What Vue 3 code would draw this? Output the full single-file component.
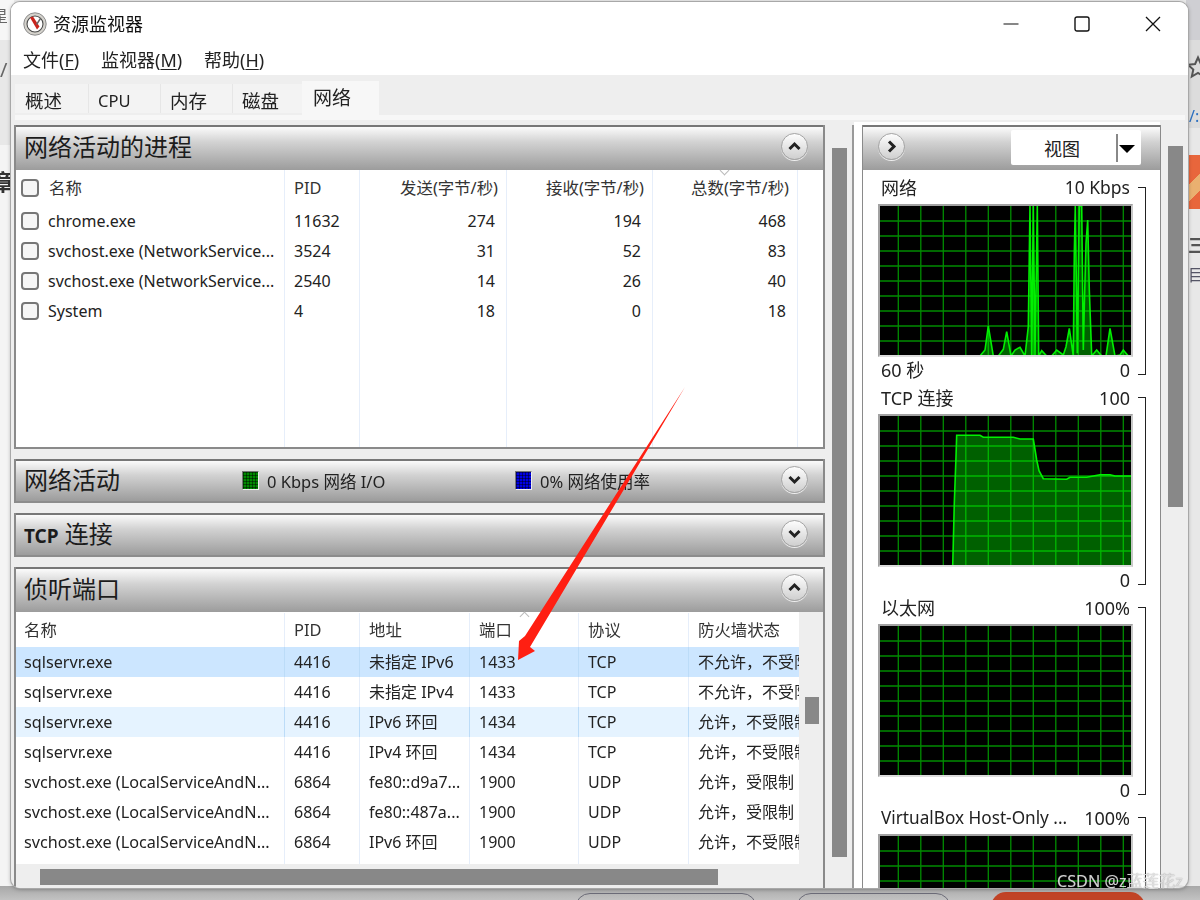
<script setup>
const tabs = [
  { label: '概述' },
  { label: 'CPU' },
  { label: '内存' },
  { label: '磁盘' },
  { label: '网络', active: true }
]

const processes = [
  ['chrome.exe', '11632', '274', '194', '468'],
  ['svchost.exe (NetworkService...', '3524', '31', '52', '83'],
  ['svchost.exe (NetworkService...', '2540', '14', '26', '40'],
  ['System', '4', '18', '0', '18']
]

const ports = [
  { c: ['sqlservr.exe', '4416', '未指定 IPv6', '1433', 'TCP', '不允许，不受限制'], tone: 'sel' },
  { c: ['sqlservr.exe', '4416', '未指定 IPv4', '1433', 'TCP', '不允许，不受限制'] },
  { c: ['sqlservr.exe', '4416', 'IPv6 环回', '1434', 'TCP', '允许，不受限制'], tone: 'hover' },
  { c: ['sqlservr.exe', '4416', 'IPv4 环回', '1434', 'TCP', '允许，不受限制'] },
  { c: ['svchost.exe (LocalServiceAndN...', '6864', 'fe80::d9a7...', '1900', 'UDP', '允许，受限制'] },
  { c: ['svchost.exe (LocalServiceAndN...', '6864', 'fe80::487a...', '1900', 'UDP', '允许，受限制'] },
  { c: ['svchost.exe (LocalServiceAndN...', '6864', 'IPv6 环回', '1900', 'UDP', '允许，不受限制'] }
]

const vLines = Array.from({ length: 11 }, (_, i) => 18.3 + 22.5 * i)
const hLines = Array.from({ length: 9 }, (_, i) => 15 + 15 * i)

const net = [[420,738],[435,720],[445,648],[460,738],[475,738],[490,718],[500,665],[513,738],[525,720],[540,712],[555,738],[565,650],[570,288],[575,738],[580,288],[585,738],[592,288],[596,738],[605,722],[620,738],[635,738],[650,720],[670,735],[678,710],[688,655],[700,738],[703,430],[706,288],[712,730],[718,288],[725,288],[730,720],[733,590],[738,400],[743,330],[748,540],[755,738],[770,720],[785,738],[798,738],[810,655],[825,738],[840,735],[850,720],[865,738]]
const tcp = [[278,498],[280,430],[283,310],[288,170],[290,106],[360,106],[370,112],[460,112],[480,117],[520,117],[530,180],[537,212],[550,236],[620,238],[630,232],[680,232],[720,224],[750,224],[765,228],[818,228],[818,498]]

const pts = (list, dx, dy) => list.map(([x, y]) => `${(x / 3 - dx).toFixed(1)},${(y / 3 - dy).toFixed(1)}`).join(' ')

const graphs = [
  { title: '网络', max: '10 Kbps', left: '60 秒', right: '0', line: pts(net, 40, 96) },
  { title: 'TCP 连接', max: '100', left: '', right: '0', line: pts(tcp, 20, 16) },
  { title: '以太网', max: '100%', left: '', right: '0', line: '' },
  { title: 'VirtualBox Host-Only ...', max: '100%', left: '', right: '', line: '' }
]
</script>

<template>
  <div class="desk">
    <div class="bg-left">
      <span class="frag f1">星</span>
      <span class="frag f2">/</span>
      <span class="frag f3">章</span>
    </div>
    <div class="bg-right">
      <svg class="star" width="24" height="24" viewBox="0 0 24 24"><path d="M12 2.5L14.9 9L22 9.8L16.7 14.5L18.2 21.5L12 18L5.8 21.5L7.3 14.5L2 9.8L9.1 9Z" fill="none" stroke="#555" stroke-width="2" /></svg>
      <span class="frag f5">/:</span>
      <div class="orange"></div>
      <span class="frag f6">三</span>
      <span class="frag f7">目录</span>
    </div>
    <div class="bg-bottom">
      <div class="pill p1"></div>
      <div class="pill p2"></div>
      <div class="pill p3"></div>
    </div>

    <div class="window">
      <header class="titlebar">
        <svg class="logo" viewBox="0 0 24 24" width="24" height="24">
          <circle cx="12" cy="12" r="11.2" fill="#d4d2cc" stroke="#8d8d8d" />
          <circle cx="12" cy="12" r="8" fill="#fff" stroke="#4a4a4a" stroke-width="1.1" />
          <path d="M7 5.5L10 4.6L16.5 14.5L14 17.5Z" fill="#c9241c" />
          <path d="M17.5 6.5L13.5 12.5" stroke="#666" stroke-width="1.4" />
        </svg>
        <span class="title">资源监视器</span>
        <div class="controls">
          <span class="ctl"><svg width="16" height="16" viewBox="0 0 16 16"><path d="M0.5 8H15.5" stroke="#111" stroke-width="1.2" /></svg></span>
          <span class="ctl"><svg width="16" height="16" viewBox="0 0 16 16"><rect x="1" y="1" width="14" height="14" rx="2" fill="none" stroke="#111" stroke-width="1.4" /></svg></span>
          <span class="ctl"><svg width="16" height="16" viewBox="0 0 16 16"><path d="M1 1L15 15M15 1L1 15" stroke="#111" stroke-width="1.3" /></svg></span>
        </div>
      </header>

      <nav class="menu">
        <span class="mi mi1">文件(<u>F</u>)</span>
        <span class="mi mi2">监视器(<u>M</u>)</span>
        <span class="mi mi3">帮助(<u>H</u>)</span>
      </nav>

      <div class="tabs">
        <span v-for="t in tabs" :key="t.label" class="tab" :class="{ active: t.active }">{{ t.label }}</span>
      </div>
      <div class="tabline"></div>

      <div class="content">
        <section class="left">
          <div class="panel p-proc">
            <div class="phead">
              <h2>网络活动的进程</h2>
              <span class="rbtn"><svg width="15" height="15" viewBox="0 0 15 15"><path d="M2.5 10L7.5 5L12.5 10" fill="none" stroke="#222" stroke-width="3" /></svg></span>
            </div>
            <div class="pbody proc">
              <span class="caret c-total"></span>
              <div class="row proc-row head">
                <div class="cell name"><i class="check"></i><span class="hname">名称</span></div>
                <div class="cell">PID</div>
                <div class="cell num h">发送(字节/秒)</div>
                <div class="cell num h">接收(字节/秒)</div>
                <div class="cell num h">总数(字节/秒)</div>
                <div class="cell last"></div>
              </div>
              <div v-for="(p, i) in processes" :key="i" class="row proc-row">
                <div class="cell name"><i class="check"></i><span class="pname">{{ p[0] }}</span></div>
                <div class="cell">{{ p[1] }}</div>
                <div class="cell num">{{ p[2] }}</div>
                <div class="cell num">{{ p[3] }}</div>
                <div class="cell num">{{ p[4] }}</div>
                <div class="cell last"></div>
              </div>
              <div class="row proc-row filler">
                <div class="cell"></div><div class="cell"></div><div class="cell"></div><div class="cell"></div><div class="cell"></div><div class="cell last"></div>
              </div>
            </div>
          </div>

          <div class="panel closed">
            <div class="phead">
              <h2>网络活动</h2>
              <div class="legend">
                <span class="lg"><i class="sw green"></i>0 Kbps 网络 I/O</span>
                <span class="lg lg2"><i class="sw blue"></i>0% 网络使用率</span>
              </div>
              <span class="rbtn"><svg width="15" height="15" viewBox="0 0 15 15"><path d="M2.5 5L7.5 10L12.5 5" fill="none" stroke="#222" stroke-width="3" /></svg></span>
            </div>
          </div>

          <div class="panel closed">
            <div class="phead">
              <h2><b>TCP</b> 连接</h2>
              <span class="rbtn"><svg width="15" height="15" viewBox="0 0 15 15"><path d="M2.5 5L7.5 10L12.5 5" fill="none" stroke="#222" stroke-width="3" /></svg></span>
            </div>
          </div>

          <div class="panel p-ports">
            <div class="phead">
              <h2>侦听端口</h2>
              <span class="rbtn"><svg width="15" height="15" viewBox="0 0 15 15"><path d="M2.5 10L7.5 5L12.5 10" fill="none" stroke="#222" stroke-width="3" /></svg></span>
            </div>
            <div class="pbody ports">
              <div class="ports-top">
                <div class="ports-table">
                  <span class="caret up c-port"></span>
                  <div class="row port-row head">
                    <div class="cell n2">名称</div>
                    <div class="cell">PID</div>
                    <div class="cell">地址</div>
                    <div class="cell">端口</div>
                    <div class="cell">协议</div>
                    <div class="cell last">防火墙状态</div>
                  </div>
                  <div v-for="(r, i) in ports" :key="i" class="row port-row" :class="r.tone">
                    <div v-for="(v, j) in r.c" :key="j" class="cell" :class="{ n2: j === 0, last: j === 5 }">{{ v }}</div>
                  </div>
                  <div class="row port-row filler">
                    <div class="cell"></div><div class="cell"></div><div class="cell"></div><div class="cell"></div><div class="cell"></div><div class="cell last"></div>
                  </div>
                </div>
                <div class="vtrack"><div class="vthumb"></div></div>
              </div>
              <div class="htrack"><div class="hthumb"></div></div>
            </div>
          </div>
        </section>

        <div class="lscroll"></div>
        <div class="divider"></div>

        <section class="right">
          <div class="panel rpanel">
            <div class="phead rhead">
              <span class="rbtn"><svg width="15" height="15" viewBox="0 0 15 15"><path d="M5 2.5L10 7.5L5 12.5" fill="none" stroke="#222" stroke-width="3" /></svg></span>
              <div class="viewbtn">
                <span class="vlabel">视图</span>
                <i class="vsep"></i>
                <i class="vtri"></i>
              </div>
            </div>
            <div class="rbody">
              <div v-for="g in graphs" :key="g.title" class="gblock">
                <div class="gmain">
                  <div class="glabel"><span>{{ g.title }}</span><span>{{ g.max }}</span></div>
                  <div class="graph">
                    <svg width="251" height="149" viewBox="0 0 251 149">
                      <path v-for="x in vLines" :key="'v' + x" :d="`M${x} 0V149`" class="gridline" />
                      <path v-for="y in hLines" :key="'h' + y" :d="`M0 ${y}H251`" class="gridline" />
                      <polygon v-if="g.line" :points="g.line" class="gfill" />
                      <polyline v-if="g.line" :points="g.line" class="gstroke" />
                    </svg>
                  </div>
                  <div class="gfoot"><span>{{ g.left }}</span><span>{{ g.right }}</span></div>
                </div>
                <div class="bracket"></div>
              </div>
            </div>
          </div>
        </section>

        <div class="rscroll"></div>
      </div>
    </div>

    <svg class="arrow" width="1200" height="900" viewBox="0 0 1200 900">
      <polygon points="685,387 525,636 519,641 518,660 535,651 530,647" fill="#ff1f12" />
    </svg>
    <div class="mark">CSDN @z蓝莲花z</div>
  </div>
</template>

<style>
html, body { margin: 0; padding: 0; overflow: hidden; }
</style>

<style scoped>
.desk {
  position: relative;
  width: 1200px;
  height: 900px;
  overflow: hidden;
  background: #e9e9e9;
  font-family: "Noto Sans", "Noto Sans CJK SC", sans-serif;
  color: #222;
  padding-top: 2px;
  box-sizing: border-box;
}

/* page behind the window */
.bg-left, .bg-right { position: absolute; top: 0; height: 890px; overflow: hidden; }
.bg-left { left: 0; width: 14px; background: linear-gradient(#f6f6f6 40px, #e8e8e8 40px, #e8e8e8 145px, #f4f4f4 145px); }
.bg-right { left: 1186px; width: 14px; background: linear-gradient(#cfcfd3 40px, #dcdcdc 40px, #dcdcdc 128px, #e8e8e8 128px); }
.frag { position: absolute; color: #444; white-space: nowrap; line-height: 1; }
.f1 { left: -8px; top: 8px; font-size: 16px; color: #666; }
.f2 { left: 0; top: 60px; font-size: 20px; color: #666; }
.f3 { left: -8px; top: 170px; font-size: 22px; font-weight: 700; color: #333; }
.star { position: absolute; left: 0; top: 55px; }
.f5 { left: 3px; top: 108px; font-size: 16px; color: #2a6fc0; }
.f6 { left: 2px; top: 236px; font-size: 18px; color: #555; font-weight: 700; }
.f7 { left: 2px; top: 267px; font-size: 16px; color: #556; }
.orange { position: absolute; left: 2px; top: 155px; width: 14px; height: 54px; background: linear-gradient(135deg, #e8663c 45%, #eab070 45%, #eab070 70%, #e8663c 70%); }
.bg-bottom { position: absolute; left: 0; right: 0; top: 886px; height: 14px; background: linear-gradient(#a8a8a8, #c2c2c2); }
.pill { position: absolute; top: 7px; height: 30px; border-radius: 16px; border: 1px solid #6c6c78; box-sizing: border-box; }
.p1 { left: 575px; width: 182px; }
.p2 { left: 796px; width: 155px; }
.p3 { left: 991px; width: 154px; background: #c14326; border: 0; top: 6px; }

/* window */
.window {
  position: relative;
  margin: 0 12px 0 11px;
  height: 886px;
  background: #eee;
  border-radius: 9px;
  overflow: hidden;
  display: flex;
  flex-direction: column;
  box-shadow: 0 0 0 1px #a8a8a8, 0 1px 4px rgba(0, 0, 0, .35);
}
.titlebar { height: 41px; background: #fff; display: flex; align-items: center; padding-left: 12px; flex: none; }
.logo { margin-top: 2px; }
.title { margin-left: 6px; font-size: 18px; color: #111; }
.controls { margin-left: auto; display: flex; }
.ctl { width: 71px; height: 41px; display: flex; align-items: center; justify-content: center; margin-top: 3px; }
.menu { height: 32px; background: #fff; display: flex; align-items: center; flex: none; }
.mi { font-size: 18px; color: #222; position: absolute; }
.mi u { text-underline-offset: 2px; }
.mi1 { left: 12px; }
.mi2 { left: 90px; }
.mi3 { left: 193px; }

.tabs { height: 40px; flex: none; display: flex; align-items: flex-start; padding-left: 4px; }
.tab {
  margin-top: 9px;
  height: 29px;
  width: 72px;
  box-sizing: border-box;
  background: #f3f3f3;
  border-left: 1px solid #e6e6e6;
  padding-left: 9px;
  font-size: 18.5px;
  line-height: 33px;
  color: #222;
}
.tab:first-child { width: 73px; border-left: 0; padding-left: 10px; }
.tab:nth-child(2) { font-size: 16.5px; }
.tab:nth-child(4) { width: 70px; }
.tab.active {
  margin-top: 6px;
  height: 34px;
  width: 77px;
  background: #f7f7f7;
  border-left: 0;
  padding-left: 11px;
  font-size: 19px;
  line-height: 35px;
}
.tabline { height: 5px; margin: 0 3px 0 4px; background: #f7f7f7; flex: none; }

.content { flex: 1; min-height: 0; display: flex; padding: 5px 0 0 3px; align-items: stretch; }
.left { width: 811px; flex: none; display: flex; flex-direction: column; gap: 10px; }
.lscroll { width: 15px; margin: 23px 0 31px 7px; background: #888; flex: none; }
.divider { width: 2px; margin: 0 0 0 5px; background: #9a9a9a; flex: none; }
.right { width: 306px; flex: none; background: #fff; padding-left: 8px; box-sizing: border-box; margin-top: -3px; padding-top: 3px; }
.rscroll { width: 15px; margin: 21px 0 381px 8px; background: #888; flex: none; }

/* panels */
.panel { display: flex; flex-direction: column; box-sizing: border-box; border: 1px solid #8a8a8a; border-width: 0 2px 0 2px; }
.p-proc { height: 324px; }
.closed { height: 44px; }
.p-ports { flex: 1; min-height: 0; }
.phead {
  position: relative;
  height: 45px;
  flex: none;
  box-sizing: border-box;
  border-top: 2px solid #777;
  background: linear-gradient(#fbfbfb, #d2d2d2 35%, #9c9c9c);
  display: flex;
  align-items: center;
  padding-left: 8px;
}
.closed .phead { height: 44px; border-bottom: 2px solid #8c8c8c; }
h2 { margin: -3px 0 0; font-size: 24px; font-weight: 400; color: #1c1c1c; line-height: 1; }
.closed h2 { margin-top: -2px; }
h2 b { font-size: 19px; font-weight: 700; }
.rbtn {
  position: absolute;
  right: 15px;
  top: 6px;
  width: 27px;
  height: 27px;
  border-radius: 50%;
  box-sizing: border-box;
  border: 1px solid #a4a4a4;
  background: linear-gradient(#fdfdfd, #cfcfcf);
  box-shadow: 0 1px 0 #eee;
  display: flex;
  align-items: center;
  justify-content: center;
}
.closed .rbtn { top: 5px; }
.p-ports .rbtn { top: 5px; }
.legend { position: absolute; left: 226px; top: -1px; bottom: 0; display: flex; align-items: center; }
.lg { display: flex; align-items: center; font-size: 16.5px; color: #222; width: 273px; }
.sw {
  width: 17px;
  height: 19px;
  margin-right: 8px;
  box-sizing: border-box;
  border: 1px solid;
  border-color: #777 #eee #eee #777;
}
.green { background: linear-gradient(rgba(0,0,0,.45) 1px, transparent 1px) 0 0 / 3px 3px, linear-gradient(90deg, rgba(0,0,0,.45) 1px, transparent 1px) 0 0 / 3px 3px, #008a00; }
.blue { background: linear-gradient(rgba(0,0,0,.45) 1px, transparent 1px) 0 0 / 3px 3px, linear-gradient(90deg, rgba(0,0,0,.45) 1px, transparent 1px) 0 0 / 3px 3px, #0000e6; }

.pbody { flex: 1; min-height: 0; background: #fff; display: flex; flex-direction: column; position: relative; }
.proc { border-bottom: 2px solid #8a8a8a; }
.ports { background: #eee; padding-bottom: 3px; }

.row { display: grid; height: 30px; font-size: 16px; color: #222; flex: none; }
.row.head { height: 36px; font-size: 16.4px; }
.proc-row { grid-template-columns: 269px 75px 147px 146px 145px 1fr; }
.port-row { grid-template-columns: 269px 75px 110px 109px 110px 110px; height: 30px; }
.port-row.head { height: 35px; padding-top: 1px; box-sizing: border-box; }
.filler { flex: 1; height: auto; min-height: 0; }
.cell {
  box-sizing: border-box;
  border-right: 1px solid #e6eefa;
  padding-left: 9px;
  display: flex;
  align-items: center;
  white-space: nowrap;
  overflow: hidden;
  line-height: 1;
}
.cell.last { border-right: 0; }
.head .cell { color: #333; }
.cell.name { padding-left: 5px; }
.cell.n2 { padding-left: 8px; }
.cell.num { justify-content: flex-end; padding: 0 11px 0 0; }
.cell.num.h { padding-right: 8px; }
.row:not(.head) .cell.n2 { font-size: 16.2px; }
.check {
  width: 18px;
  height: 18px;
  box-sizing: border-box;
  border: 2px solid #777;
  border-radius: 4px;
  background: #f6f6f6;
  flex: none;
}
.hname { margin-left: 10px; }
.pname { margin-left: 9px; }
.caret { position: absolute; width: 7px; height: 7px; box-sizing: border-box; border: solid #bbb; border-width: 0 1px 1px 0; transform: rotate(45deg); z-index: 1; }
.c-total { left: 705px; top: -3px; }
.caret.up { transform: rotate(225deg); }
.c-port { left: 505px; top: 1px; }

.ports-top { flex: 1; min-height: 0; display: flex; }
.ports-table { position: relative; width: 783px; background: #fff; display: flex; flex-direction: column; flex: none; }
.sel { background: #cce6ff; }
.hover { background: #e5f3ff; }
.sel .cell, .hover .cell { border-right-color: #bcdcf8; }
.vtrack { flex: 1; position: relative; }
.vthumb { width: 14px; height: 27px; background: #888; margin: 85px 0 0 6px; }
.htrack { height: 21px; flex: none; padding: 5px 0 0 24px; box-sizing: border-box; }
.hthumb { width: 678px; height: 16px; background: #888; }

/* right panel */
.rpanel { width: 299px; height: 100%; border-width: 0 1px; }
.rhead { height: 45px; }
.rhead .rbtn { right: auto; left: 15px; }
.viewbtn {
  position: absolute;
  left: 148px;
  top: 3px;
  width: 130px;
  height: 35px;
  background: #fff;
  border-radius: 2px;
  display: flex;
  align-items: center;
}
.vlabel { font-size: 18px; margin-left: 33px; color: #222; }
.vsep { position: absolute; left: 105px; top: 4px; width: 2px; height: 28px; background: #888; }
.vtri { position: absolute; left: 108px; top: 15px; width: 0; height: 0; border: 8px solid transparent; border-top: 8px solid #000; border-bottom: 0; }
.rbody { flex: 1; min-height: 0; background: #fff; padding: 8px 0 0 15px; display: flex; flex-direction: column; overflow: hidden; }
.gblock { display: flex; height: 210px; flex: none; }
.gmain { width: 255px; flex: none; }
.glabel, .gfoot { display: flex; justify-content: space-between; font-size: 18px; line-height: 1; color: #222; padding: 0 3px; align-items: center; }
.glabel { height: 26px; padding-bottom: 6px; box-sizing: border-box; }
.gblock:first-child .glabel span:last-child { font-size: 17.5px; }
.gblock:last-child .glabel span:first-child { font-size: 17.2px; }
.gfoot { height: 28px; padding-bottom: 2px; box-sizing: border-box; }
.graph { height: 153px; box-sizing: border-box; border: 2px solid; border-color: #a2a2a2 #c8c8c8 #dcdcdc #a2a2a2; background: #000; }
.graph svg { display: block; }
.gridline { stroke: #008c00; stroke-width: 1.3; fill: none; }
.gfill { fill: #006000; stroke: none; mix-blend-mode: screen; }
.gstroke { fill: none; stroke: #00f000; stroke-width: 1.6; }
.bracket {
  width: 8px;
  height: 188px;
  margin: 9px 0 0 5px;
  box-sizing: border-box;
  border: solid #222;
  border-width: 1.5px 1.5px 1.5px 0;
  flex: none;
}

.arrow { position: absolute; left: 0; top: 0; pointer-events: none; }
.mark {
  position: absolute;
  left: 1057px;
  top: 871px;
  font-size: 16.2px;
  line-height: 20px;
  color: rgba(235, 235, 235, .85);
  text-shadow: 0 0 1px rgba(90, 90, 90, .7);
  white-space: nowrap;
}
</style>
